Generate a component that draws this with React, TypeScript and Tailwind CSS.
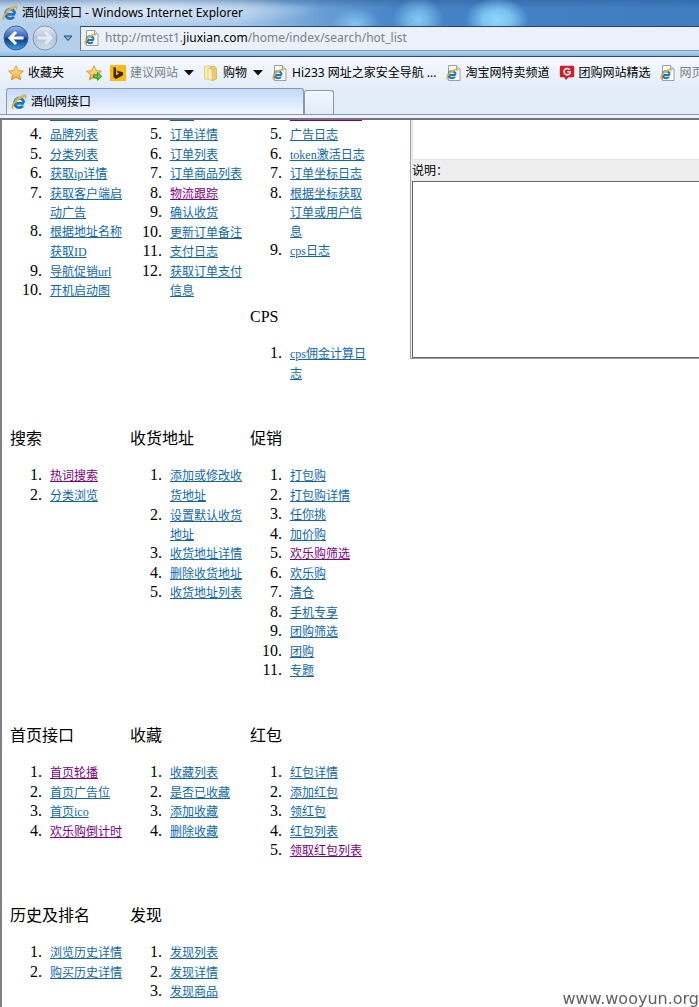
import type { ReactNode } from "react";

type Entry = { text: string; visited?: boolean };
type Group = { title?: string; start?: number; peek?: string; items: Entry[] };

const l = (text: string): Entry => ({ text });
const v = (text: string): Entry => ({ text, visited: true });

const sections: Group[][][] = [
  [
    [
      {
        start: 4,
        peek: "w-12 bg-[#1467a5]",
        items: [l("品牌列表"), l("分类列表"), l("获取ip详情"), l("获取客户端启动广告"), l("根据地址名称获取ID"), l("导航促销url"), l("开机启动图")],
      },
    ],
    [
      {
        start: 5,
        peek: "w-6 bg-[#1467a5]",
        items: [l("订单详情"), l("订单列表"), l("订单商品列表"), v("物流跟踪"), l("确认收货"), l("更新订单备注"), l("支付日志"), l("获取订单支付信息")],
      },
    ],
    [
      {
        start: 5,
        peek: "w-[72px] bg-[#800080]",
        items: [l("广告日志"), l("token激活日志"), l("订单坐标日志"), l("根据坐标获取订单或用户信息"), l("cps日志")],
      },
      { title: "CPS", items: [l("cps佣金计算日志")] },
    ],
  ],
  [
    [{ title: "搜索", items: [v("热词搜索"), l("分类浏览")] }],
    [{ title: "收货地址", items: [l("添加或修改收货地址"), l("设置默认收货地址"), l("收货地址详情"), l("删除收货地址"), l("收货地址列表")] }],
    [
      {
        title: "促销",
        items: [l("打包购"), l("打包购详情"), l("任你挑"), l("加价购"), v("欢乐购筛选"), l("欢乐购"), l("清仓"), l("手机专享"), l("团购筛选"), l("团购"), l("专题")],
      },
    ],
  ],
  [
    [{ title: "首页接口", items: [v("首页轮播"), l("首页广告位"), l("首页ico"), v("欢乐购倒计时")] }],
    [{ title: "收藏", items: [l("收藏列表"), l("是否已收藏"), l("添加收藏"), l("删除收藏")] }],
    [{ title: "红包", items: [l("红包详情"), l("添加红包"), l("领红包"), l("红包列表"), v("领取红包列表")] }],
  ],
  [
    [{ title: "历史及排名", items: [l("浏览历史详情"), l("购买历史详情")] }],
    [{ title: "发现", items: [l("发现列表"), l("发现详情"), l("发现商品")] }],
  ],
];

function Orbit() {
  return (
    <>
      <path d="M13 9.300H5.200M12.900 8.800A4.700 4.700 0 1 0 11.900 11.800" fill="none" stroke="#1b74c5" strokeWidth="2.800" />
      <path d="M4 7a4.800 4.800 0 0 1 6.800-2.600" fill="none" stroke="#62c0f2" strokeWidth="1.400" />
      <path d="M2.600 15C-.6 15.800.2 10.400 4.600 6 8.800 1.800 14.600-.6 15.200 1.800c.2.900-.3 2-.9 3 .2-1.700-.3-2.300-1.600-1.900C9.400 3.900 5 7.600 3 11c-1.200 2-1.200 3.400-.4 4z" fill="#eeb52c" stroke="#c98a16" strokeWidth=".3" />
    </>
  );
}

function IeIcon() {
  return (
    <svg viewBox="0 0 16 16" className="size-4 shrink-0" aria-hidden="true">
      <Orbit />
    </svg>
  );
}

function PageIcon() {
  return (
    <svg viewBox="0 0 16 16" className="size-4 shrink-0" aria-hidden="true">
      <path d="M2.500.5h8l3.500 3.500v11.500H2.500z" fill="#fdfdfd" stroke="#9a9fa6" />
      <path d="M10.500.5V4H14" fill="#e2e5ea" stroke="#9a9fa6" />
      <g transform="translate(0 3) scale(.75)">
        <Orbit />
      </g>
    </svg>
  );
}

function StarIcon({ add }: { add?: boolean }) {
  return (
    <svg viewBox="0 0 16 16" className="size-4 shrink-0" aria-hidden="true">
      <defs>
        <linearGradient id="gold" x1="0" y1="0" x2="0" y2="1">
          <stop offset="0" stopColor="#fff3a8" />
          <stop offset="1" stopColor="#f9a424" />
        </linearGradient>
      </defs>
      <path d="M8 .8l2.200 4.800 5.200.6-3.900 3.500 1.100 5.200L8 12.300l-4.600 2.600 1.100-5.200L.6 6.200l5.200-.6z" fill="url(#gold)" stroke="#d9801a" strokeWidth=".8" strokeLinejoin="round" />
      {add && <path d="M7.500 9.700h4V7.200l4.200 4.100-4.200 4.100v-2.500h-4z" fill="#58c63c" stroke="#278a1b" strokeWidth=".8" />}
    </svg>
  );
}

function BingIcon() {
  return (
    <svg viewBox="0 0 16 16" className="size-4 shrink-0" aria-hidden="true">
      <path d="M0 0h16v16H0z" fill="#fdb813" />
      <path d="M3.500 2l2.500.8v7.400l3.200-1.700-1.500-.7-1-2.400L13 7.200v3L6 14l-2.500-1.400z" fill="#3a2c14" />
    </svg>
  );
}

function FolderIcon() {
  return (
    <svg viewBox="0 0 16 16" className="size-4 shrink-0" aria-hidden="true">
      <path d="M1.500 1.500l5-.8 1 .8v13l-6-.5z" fill="#fbeeb0" stroke="#d9bd62" strokeWidth=".7" />
      <path d="M7.500 1.500h4l2 1.500v11l-3.500 1.500-2.500-.8z" fill="#ecca6c" stroke="#cfae50" strokeWidth=".7" />
      <path d="M5 3l4 1.500v11L5 14z" fill="#fdf3c2" stroke="#d9bd62" strokeWidth=".6" />
    </svg>
  );
}

function GroupBuyIcon() {
  return (
    <svg viewBox="0 0 16 16" className="size-4 shrink-0" aria-hidden="true">
      <path d="M2 .8h12a1.200 1.200 0 0 1 1.200 1.200v9A1.200 1.200 0 0 1 14 12.200h-4.500L7 15l-1.800-2.800H2A1.200 1.200 0 0 1 .8 11V2A1.200 1.200 0 0 1 2 .8z" fill="#cf1f2b" />
      <path d="M10.800 4.600A3.200 3.200 0 1 0 11 8.300V6.700H8.300" fill="none" stroke="#fff" strokeWidth="1.500" />
    </svg>
  );
}

function Caret() {
  return (
    <svg viewBox="0 0 10 6" className="h-[6px] w-[10px] shrink-0" aria-hidden="true">
      <path d="M0 0h10L5 5.500z" fill="#111" />
    </svg>
  );
}

function NavButton({ label, back }: { label: string; back?: boolean }) {
  return (
    <button type="button" aria-label={label} className="size-[26px] shrink-0">
      <svg viewBox="0 0 26 26" className="size-full" aria-hidden="true">
        <defs>
          <linearGradient id="back" x1="0" y1="0" x2="0" y2="1">
            <stop offset="0" stopColor="#9fbde6" />
            <stop offset=".45" stopColor="#2f62b8" />
            <stop offset=".55" stopColor="#103a8c" />
            <stop offset="1" stopColor="#3fa4ea" />
          </linearGradient>
          <linearGradient id="forward" x1="0" y1="0" x2="0" y2="1">
            <stop offset="0" stopColor="#e6eef7" />
            <stop offset=".5" stopColor="#b3c3d6" />
            <stop offset="1" stopColor="#d3e0ee" />
          </linearGradient>
        </defs>
        <circle cx="13" cy="13" r="12" fill={back ? "url(#back)" : "url(#forward)"} stroke={back ? "#44618f" : "#7f93ad"} />
        <path
          d={back ? "M20.500 13H7.500M13 7l-6 6 6 6" : "M5.500 13h13M13 7l6 6-6 6"}
          fill="none"
          stroke={back ? "#fff" : "#e3ebf4"}
          strokeWidth="3"
        />
      </svg>
    </button>
  );
}

function Favorite({ icon, children, muted, menu }: { icon: ReactNode; children: string; muted?: boolean; menu?: boolean }) {
  const tone = muted ? "text-[#7a7f87]" : "text-black";
  const base = "flex shrink-0 items-center gap-1 whitespace-nowrap";
  return menu ? (
    <button type="button" className={`${base} ${tone}`}>
      {icon}
      {children}
      <span className="ml-[2px] flex">
        <Caret />
      </span>
    </button>
  ) : (
    <a href="#" className={`${base} ${tone}`}>
      {icon}
      {children}
    </a>
  );
}

function BrowserChrome() {
  return (
    <header className="font-['Noto_Sans','Noto_Sans_CJK_SC',sans-serif] text-xs">
      <div className="bg-[radial-gradient(ellipse_32px_22px_at_497px_20px,#8fd6fc,#7cc2f2_45%,transparent),radial-gradient(ellipse_26px_22px_at_418px_20px,#86c8f4,#6fb2e6_40%,transparent),radial-gradient(ellipse_24px_16px_at_355px_24px,#84c4f0,transparent),radial-gradient(ellipse_180px_16px_at_140px_11px,#dbe8f5,transparent),linear-gradient(180deg,#28548a66_0,transparent_8px),linear-gradient(90deg,#b9d2ec_0,#a5c6e8_240px,#6a9fd6_320px,#4682c6_400px,#3f7cc0_100%)]">
        <h1 className="flex h-[25px] items-center gap-1 pl-[2px] text-black">
          <IeIcon />
          酒仙网接口 - Windows Internet Explorer
        </h1>
        <div className="flex items-center pl-[3px]">
          <NavButton label="后退" back />
          <span className="w-[3px]" />
          <NavButton label="前进" />
          <button type="button" aria-label="最近浏览的页面" className="mr-[3px] ml-px flex h-6 w-[18px] items-center justify-center">
            <svg viewBox="0 0 10 7" className="h-[7px] w-[10px]" aria-hidden="true">
              <path d="M1 1h8L5 5.500z" fill="#7db5e0" stroke="#1c4c7c" />
            </svg>
          </button>
          <div className="flex h-[25px] flex-1 items-center gap-[5px] overflow-hidden border-y border-l border-t-[#24466d] border-b-[#8299b5] border-l-[#5b7899] bg-[#eaf1fa] pl-[3px]">
            <PageIcon />
            <div
              role="textbox"
              aria-label="地址"
              contentEditable
              suppressContentEditableWarning
              className="flex-1 whitespace-nowrap text-xs text-[#7b8086] outline-none"
            >
              http://mtest1.<span className="text-black">jiuxian.com</span>/home/index/search/hot_list
            </div>
          </div>
        </div>
        <div className="h-[5px] bg-linear-to-b from-[#b5d3ee] to-[#8bbbe4]" />
      </div>
      <nav aria-label="收藏夹栏" className="flex h-8 items-center overflow-hidden border-t border-[#34475f] bg-linear-to-b from-[#f6f9fe] to-[#e3edf8] pl-2">
        <Favorite icon={<StarIcon />}>收藏夹</Favorite>
        <span className="mr-2 ml-[14px] h-5 w-px bg-[#9aa5b3]" />
        <button type="button" aria-label="添加到收藏夹栏" className="mr-2 shrink-0">
          <StarIcon add />
        </button>
        <div className="flex gap-[9px]">
          <Favorite icon={<BingIcon />} muted menu>建议网站</Favorite>
          <Favorite icon={<FolderIcon />} menu>购物</Favorite>
          <Favorite icon={<PageIcon />}>Hi233 网址之家安全导航 ...</Favorite>
          <Favorite icon={<PageIcon />}>淘宝网特卖频道</Favorite>
          <Favorite icon={<GroupBuyIcon />}>团购网站精选</Favorite>
          <Favorite icon={<PageIcon />} muted>网页</Favorite>
        </div>
      </nav>
      <div className="flex items-end border-b border-[#8d98a8] bg-[#e1ecf8] pl-[6px]">
        <button type="button" className="flex h-[26px] w-[298px] items-center gap-1 rounded-t-[3px] border border-b-0 border-[#8d98a8] bg-linear-to-b from-[#c3dafa] to-[#f1f6fe] pl-1">
          <IeIcon />
          酒仙网接口
        </button>
        <button type="button" aria-label="新选项卡" className="h-6 w-[30px] rounded-t-[3px] border border-b-0 border-[#8d98a8] bg-linear-to-b from-[#f3f7fd] to-[#e1ecf8]" />
      </div>
      <div className="h-[5px] border-b-2 border-[#76767a] bg-[#edf2fa]" />
    </header>
  );
}

function LinkGroup({ group }: { group: Group }) {
  return (
    <section>
      {group.title && <h2 className="mb-4 leading-5">{group.title}</h2>}
      {group.peek && <div className={`mb-[3px] ml-10 h-px ${group.peek}`} />}
      <ol start={group.start} className="list-decimal pl-9">
        {group.items.map((item) => (
          <li key={item.text} className="pl-1 odd:leading-5 even:leading-[19px]">
            <a href="#" className={`text-xs leading-none underline ${item.visited ? "text-[#800080]" : "text-[#0f68ae]"}`}>
              {item.text}
            </a>
          </li>
        ))}
      </ol>
    </section>
  );
}

export default function App() {
  return (
    <div className="flex min-h-screen flex-col overflow-x-hidden bg-white text-black">
      <BrowserChrome />
      <main className="flex flex-1 items-start border-l-2 border-[#808084] font-['Liberation_Serif','Noto_Sans_CJK_SC',serif] text-base">
        <div className="flex w-[408px] shrink-0 flex-col gap-[46px] pl-2">
          {sections.map((columns, i) => (
            <div key={i} className="grid grid-cols-[repeat(3,120px)]">
              {columns.map((groups, j) => (
                <div key={j} className="flex flex-col gap-[47px]">
                  {groups.map((group, k) => (
                    <LinkGroup key={k} group={group} />
                  ))}
                </div>
              ))}
            </div>
          ))}
        </div>
        <aside className="flex flex-1 flex-col border-b border-l border-[#a0a0a0] bg-[#eeeeee] pl-px font-['Noto_Sans_CJK_SC',sans-serif] text-xs">
          <textarea aria-label="返回结果" className="h-10 w-full resize-none border-b border-l border-[#e2e5e8] bg-white outline-none" />
          <label htmlFor="notes" className="h-[21px] leading-5">
            说明：
          </label>
          <textarea id="notes" className="h-[177px] w-full resize-none border border-r-0 border-[#646464] bg-white outline-none" />
        </aside>
      </main>
      <footer className="fixed right-0 bottom-0 bg-white font-['DejaVu_Sans',sans-serif] text-base leading-4 text-[#606060]">
        www.wooyun.org
      </footer>
    </div>
  );
}
